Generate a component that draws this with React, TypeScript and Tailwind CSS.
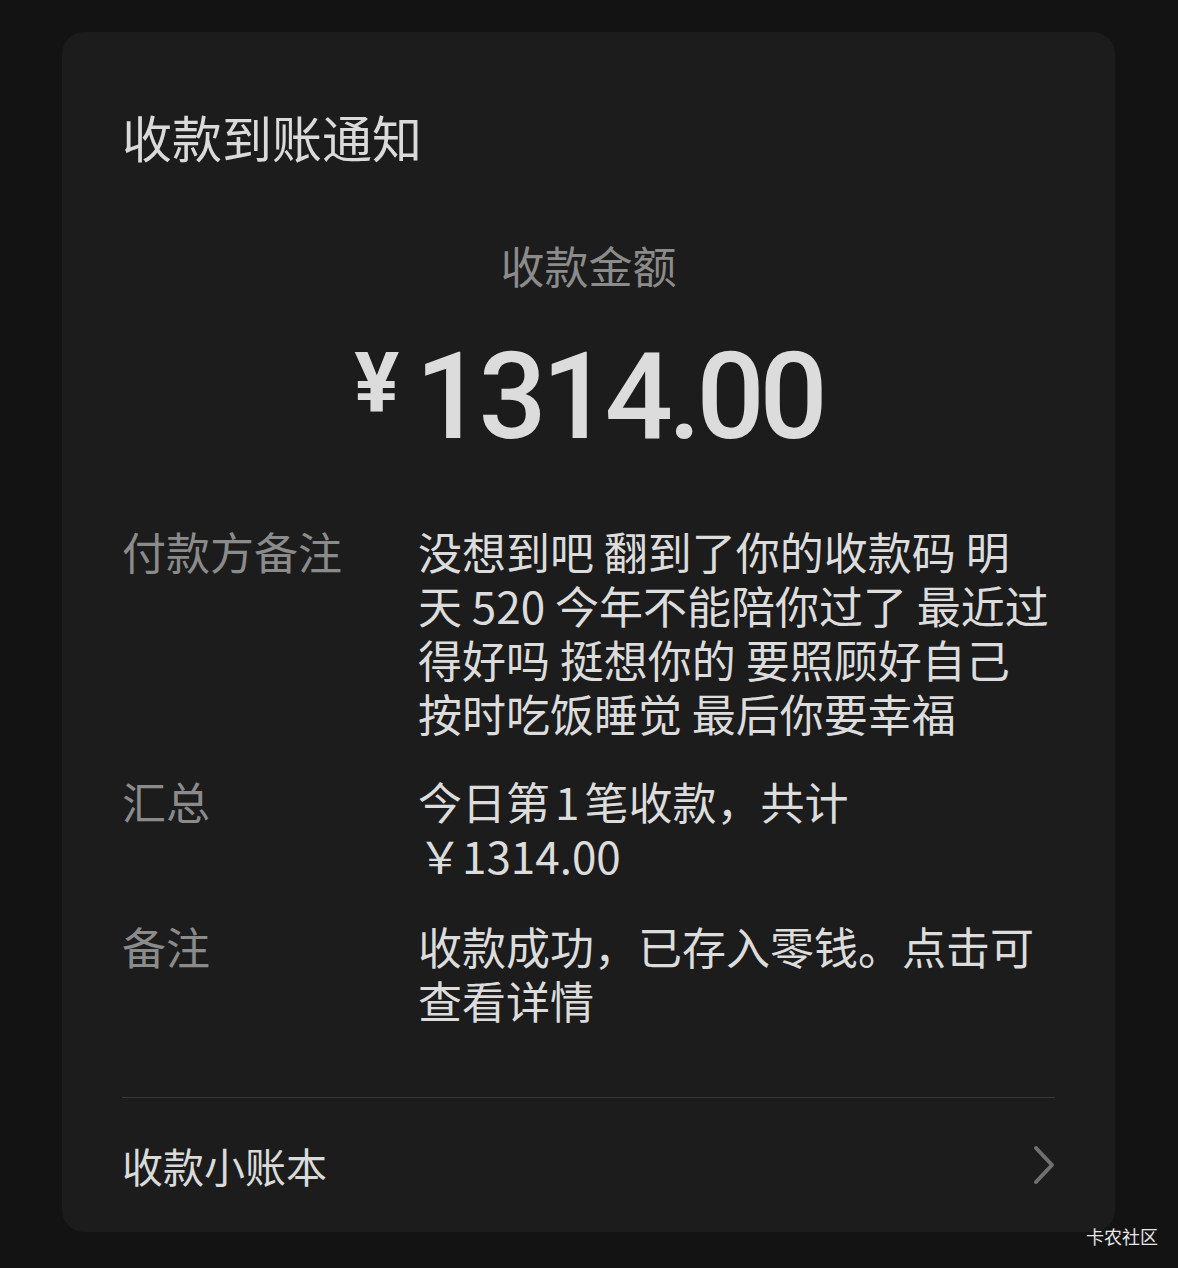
import React from 'react';

const remark = [
  '没想到吧 翻到了你的收款码 明',
  '天 520 今年不能陪你过了 最近过',
  '得好吗 挺想你的 要照顾好自己',
  '按时吃饭睡觉 最后你要幸福',
];

function Row({ label, lines, className = '' }: { label: string; lines: React.ReactNode[]; className?: string }) {
  return (
    <div className={`flex ${className}`}>
      <div className="w-[296px] shrink-0 text-[44px] leading-[54px] text-[#8b8b8b]">{label}</div>
      <div className="flex-1 text-[44px] leading-[54px] text-[#dcdcdc]">
        {lines.map((l, i) => (
          <div key={i} className="whitespace-pre">{l}</div>
        ))}
      </div>
    </div>
  );
}

export default function App() {
  return (
    <div
      className="relative w-[1178px] h-[1268px] bg-[#131313] pt-[32px] pl-[62px] overflow-hidden"
      style={{ fontFamily: '"Noto Sans CJK SC", "Noto Sans", sans-serif' }}
    >
      <div className="w-[1053px] h-[1200px] rounded-[22px] bg-[#1c1c1c] px-[60px] pt-[71px] flex flex-col">
        {/* Title */}
        <h1 className="text-[50px] leading-[66px] text-[#dadada] font-normal">收款到账通知</h1>

        {/* Amount */}
        <div className="mt-[66px] text-center text-[44px] leading-[60px] text-[#8b8b8b]">收款金额</div>
        <div className="mt-[42px] flex justify-center items-start text-[#dcdcdc]" style={{ fontFamily: 'Roboto, "Noto Sans", sans-serif' }}>
          <span className="mt-[5px] text-[84px] leading-none font-bold">¥</span>
          <span className="ml-[16px] text-[120px] leading-none font-medium tracking-[-5px]">1314.00</span>
        </div>

        {/* Details */}
        <Row className="mt-[67px]" label="付款方备注" lines={remark} />
        <Row
          className="mt-[34px]"
          label="汇总"
          lines={[
            <>今日第<span className="mx-[5px]">1</span>笔收款，共计</>,
            '￥1314.00',
          ]}
        />
        <Row className="mt-[37px]" label="备注" lines={['收款成功，已存入零钱。点击可', '查看详情']} />

        <div className="mt-[70px] h-px bg-[#383838]" />

        {/* Footer link */}
        <div className="flex-1 flex items-center justify-between">
          <span className="text-[41px] leading-[56px] text-[#dadada]">收款小账本</span>
          <svg width="26" height="40" viewBox="0 0 26 40" fill="none" className="-mr-[2px]">
            <path d="M5 3 L21 20 L5 37" stroke="#707070" strokeWidth="4" strokeLinecap="round" strokeLinejoin="round" />
          </svg>
        </div>
      </div>

      {/* Watermark */}
      <div className="absolute right-[20px] bottom-[20px] text-[18px] leading-[24px] text-[#e6e6e6]">卡农社区</div>
    </div>
  );
}
